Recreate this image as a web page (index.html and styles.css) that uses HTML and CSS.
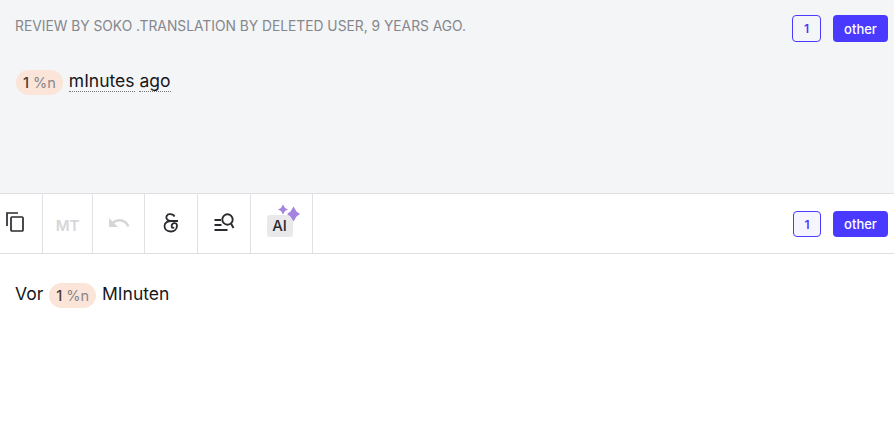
FILE: index.html
```html
<!DOCTYPE html>
<html lang="en">
<head>
    <meta charset="UTF-8">
    <title>Review</title>
    <link rel="stylesheet" href="styles.css">
</head>
<body>
    <div class="source">
        <div class="source-head">
            <p class="meta">REVIEW BY SOKO .TRANSLATION BY DELETED USER, 9 YEARS AGO.</p>
            <div class="tags">
                <span class="count">1</span>
                <span class="plural">other</span>
            </div>
        </div>
        <p class="line"><span class="pill"><b>1</b> %n</span> <span class="word">mInutes</span> <span class="word">ago</span></p>
    </div>

    <div class="toolbar">
        <div class="tool tool-copy">
            <svg width="18" height="20" viewBox="0 0 18 20" fill="none" stroke="#2b2b2f" stroke-width="1.7">
                <path d="M1 14V1H12"/>
                <rect x="5" y="5" width="12" height="14" rx="1"/>
            </svg>
        </div>
        <div class="tool tool-mt"><span class="mt">MT</span></div>
        <div class="tool tool-undo">
            <svg width="24" height="24" viewBox="0 0 24 24" fill="#d6d6d9">
                <path d="M12.500 8c-2.650 0-5.050.990-6.900 2.600L2 7v9h9l-3.620-3.620c1.390-1.160 3.160-1.880 5.120-1.880 3.540 0 6.550 2.310 7.600 5.500l2.370-.780C21.080 11.030 17.150 8 12.500 8z"/>
            </svg>
        </div>
        <div class="tool tool-amp">
            <svg width="16" height="20" viewBox="0 0 16 20" fill="none" stroke="#2b2b2f" stroke-width="1.800">
                <path d="M11.500 3.500C10.500 1.500 8.500 1 6.500 1.200C4 1.500 3 3.500 3.500 5.200C4 7 6 8 9 8H15"/>
                <path d="M9 8C5 7.800 1.500 9.500 1.500 13C1.500 16.500 4.500 18.500 8 18.500C11.500 18.500 14 16 14 12.500C14 10.500 12.500 9.800 10.800 10.200C9 10.700 8.200 12.500 8.800 14C9.300 15 10.500 15 11 14.200"/>
            </svg>
        </div>
        <div class="tool tool-find">
            <svg width="22" height="20" viewBox="0 0 22 20" fill="none" stroke="#2b2b2f" stroke-width="1.900">
                <circle cx="14.500" cy="7.500" r="5.200"/>
                <path d="M18 11.500L20.500 16"/>
                <path d="M1.500 8H8M1.500 13H8.500M1.500 18H14.500"/>
            </svg>
        </div>
        <div class="tool tool-ai">
            <span class="ai-box">AI</span>
            <svg class="sparks" width="24" height="20" viewBox="0 0 24 20" fill="#a583e0">
                <path d="M5 1.500L7 5L10 6.500L7 8L5 11.500L3 8L0 6.500L3 5Z"/>
                <path d="M15.500 3.500L18.500 8.500L22 11L18.500 13.500L15.500 18.500L12.500 13.500L9 11L12.500 8.500Z"/>
            </svg>
        </div>
        <div class="tags tags-bar">
            <span class="count count-on">1</span>
            <span class="plural">other</span>
        </div>
    </div>

    <div class="editor">
        <p class="line">Vor <span class="pill"><b>1</b> %n</span> MInuten</p>
    </div>
</body>
</html>
```

FILE: styles.css
```css
html, body {
    margin: 0;
    height: 100%;
}

body {
    background: #fff;
    font-family: "Inter", "Liberation Sans", sans-serif;
    color: #17171c;
    overflow: hidden;
}

.source {
    height: 193px;
    box-sizing: border-box;
    background: #f4f5f7;
    padding: 15px 6px 0 15px;
}

.source-head {
    display: flex;
    justify-content: space-between;
    align-items: flex-start;
}

.meta {
    margin: 3px 0 0;
    font-size: 13.800px;
    line-height: 17px;
    color: #85878c;
}

.tags {
    display: flex;
    gap: 12px;
}

.count {
    width: 27px;
    height: 25px;
    border: 1px solid #4a3aff;
    border-radius: 4px;
    display: flex;
    align-items: center;
    justify-content: center;
    font-size: 12px;
    font-weight: 600;
    color: #4a3aff;
}

.count-on {
    width: 26px;
    height: 24px;
    background: #f6f5ff;
}

.plural {
    width: 55px;
    height: 27px;
    border-radius: 4px;
    background: #4a3aff;
    color: #fff;
    display: flex;
    align-items: center;
    justify-content: center;
    font-size: 13px;
    font-weight: 500;
}

.tags-bar .plural {
    height: 26px;
}

.line {
    margin: 0;
    font-size: 17.500px;
    line-height: 25px;
}

.source .line {
    margin-top: 26px;
}

.pill {
    display: inline-block;
    height: 25px;
    margin: 2px 1px 0;
    padding: 0 7px;
    border-radius: 13px;
    background: #fbe4d8;
    font-size: 14.500px;
    color: #85878c;
    vertical-align: top;
}

.pill b {
    color: #4a3a35;
    font-weight: 500;
}

.word {
    border-bottom: 1px dotted #77777c;
}

.toolbar {
    height: 61px;
    box-sizing: border-box;
    display: flex;
    align-items: stretch;
    background: #fff;
    border-top: 1px solid #dfdfe3;
    border-bottom: 1px solid #dfdfe3;
}

.tool {
    display: flex;
    align-items: center;
    justify-content: center;
    box-sizing: border-box;
    border-right: 1px solid #e2e2e6;
}

.tool-copy { width: 43px; justify-content: flex-start; padding-left: 6px; padding-bottom: 3px; }
.tool-mt { width: 50px; }
.tool-undo { width: 52px; padding-bottom: 2px; }
.tool-amp { width: 53px; padding-bottom: 2px; }
.tool-find { width: 53px; padding-bottom: 3px; }
.tool-ai { width: 62px; position: relative; }

.mt {
    font-size: 15px;
    font-weight: 600;
    color: #d6d6d9;
    padding-top: 3px;
}

.ai-box {
    width: 26px;
    height: 22px;
    margin: 4px 4px 0 0;
    border-radius: 3px;
    background: #e9e9ec;
    display: flex;
    align-items: center;
    justify-content: center;
    font-size: 15px;
    font-weight: 500;
    color: #2b2b2f;
}

.sparks {
    position: absolute;
    top: 9px;
    left: 27px;
}

.tags-bar {
    margin-left: auto;
    margin-right: 6px;
    align-items: center;
    padding-top: 1px;
}

.editor {
    padding: 27px 15px 0;
}
```
